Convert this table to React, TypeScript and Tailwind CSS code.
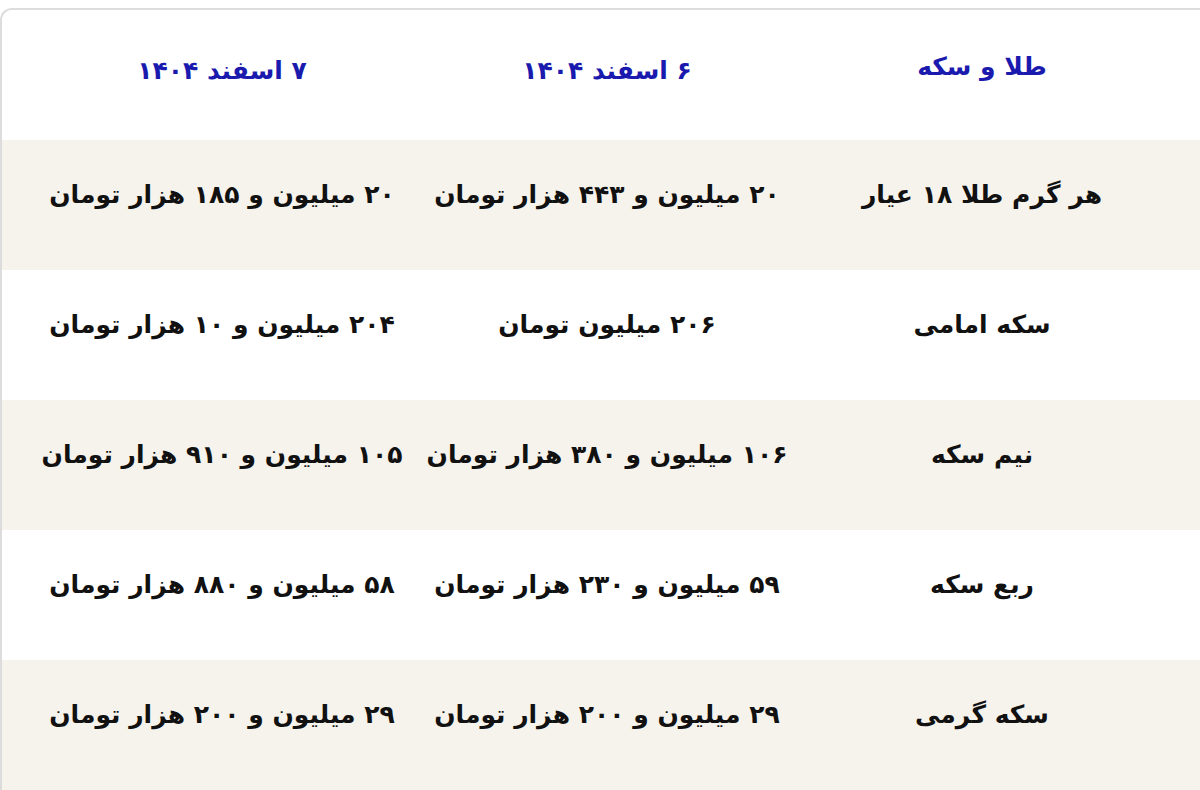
import React from 'react';

type Row = { name: string; d6: string; d7: string };

const rows: Row[] = [
  { name: 'هر گرم طلا ۱۸ عیار', d6: '۲۰ میلیون و ۴۴۳ هزار تومان', d7: '۲۰ میلیون و ۱۸۵ هزار تومان' },
  { name: 'سکه امامی', d6: '۲۰۶ میلیون تومان', d7: '۲۰۴ میلیون و ۱۰ هزار تومان' },
  { name: 'نیم سکه', d6: '۱۰۶ میلیون و ۳۸۰ هزار تومان', d7: '۱۰۵ میلیون و ۹۱۰ هزار تومان' },
  { name: 'ربع سکه', d6: '۵۹ میلیون و ۲۳۰ هزار تومان', d7: '۵۸ میلیون و ۸۸۰ هزار تومان' },
  { name: 'سکه گرمی', d6: '۲۹ میلیون و ۲۰۰ هزار تومان', d7: '۲۹ میلیون و ۲۰۰ هزار تومان' }
];

const cols = 'grid grid-cols-[440px_330px_450px]';
const cell = 'flex items-center justify-center whitespace-nowrap text-[25px] font-bold';

export default function App() {
  return (
    <div
      className="w-[1200px] h-[790px] overflow-hidden bg-white pt-2"
      style={{ fontFamily: '"DejaVu Sans", sans-serif' }}
    >
      <div className="w-[1220px] border-t-2 border-l-2 border-[#dcdcdc] rounded-tl-xl overflow-hidden">
        {/* header */}
        <div className={`${cols} h-[130px] bg-white`}>
          <div className={`${cell} pb-2 text-[#1a1aae]`} dir="rtl">۷ اسفند ۱۴۰۴</div>
          <div className={`${cell} pb-2 text-[#1a1aae]`} dir="rtl">۶ اسفند ۱۴۰۴</div>
          <div className={`${cell} pb-4 pr-[30px] text-[#1a1aae]`} dir="rtl">طلا و سکه</div>
        </div>

        {rows.map((r, i) => (
          <div
            key={i}
            className={`${cols} h-[130px] ${i % 2 === 0 ? 'bg-[#f6f3ed]' : 'bg-white'}`}
          >
            <div className={`${cell} pb-5 text-[#111]`} dir="rtl">{r.d7}</div>
            <div className={`${cell} pb-5 text-[#111]`} dir="rtl">{r.d6}</div>
            <div className={`${cell} pb-5 pr-[30px] text-[#111]`} dir="rtl">{r.name}</div>
          </div>
        ))}
      </div>
    </div>
  );
}
